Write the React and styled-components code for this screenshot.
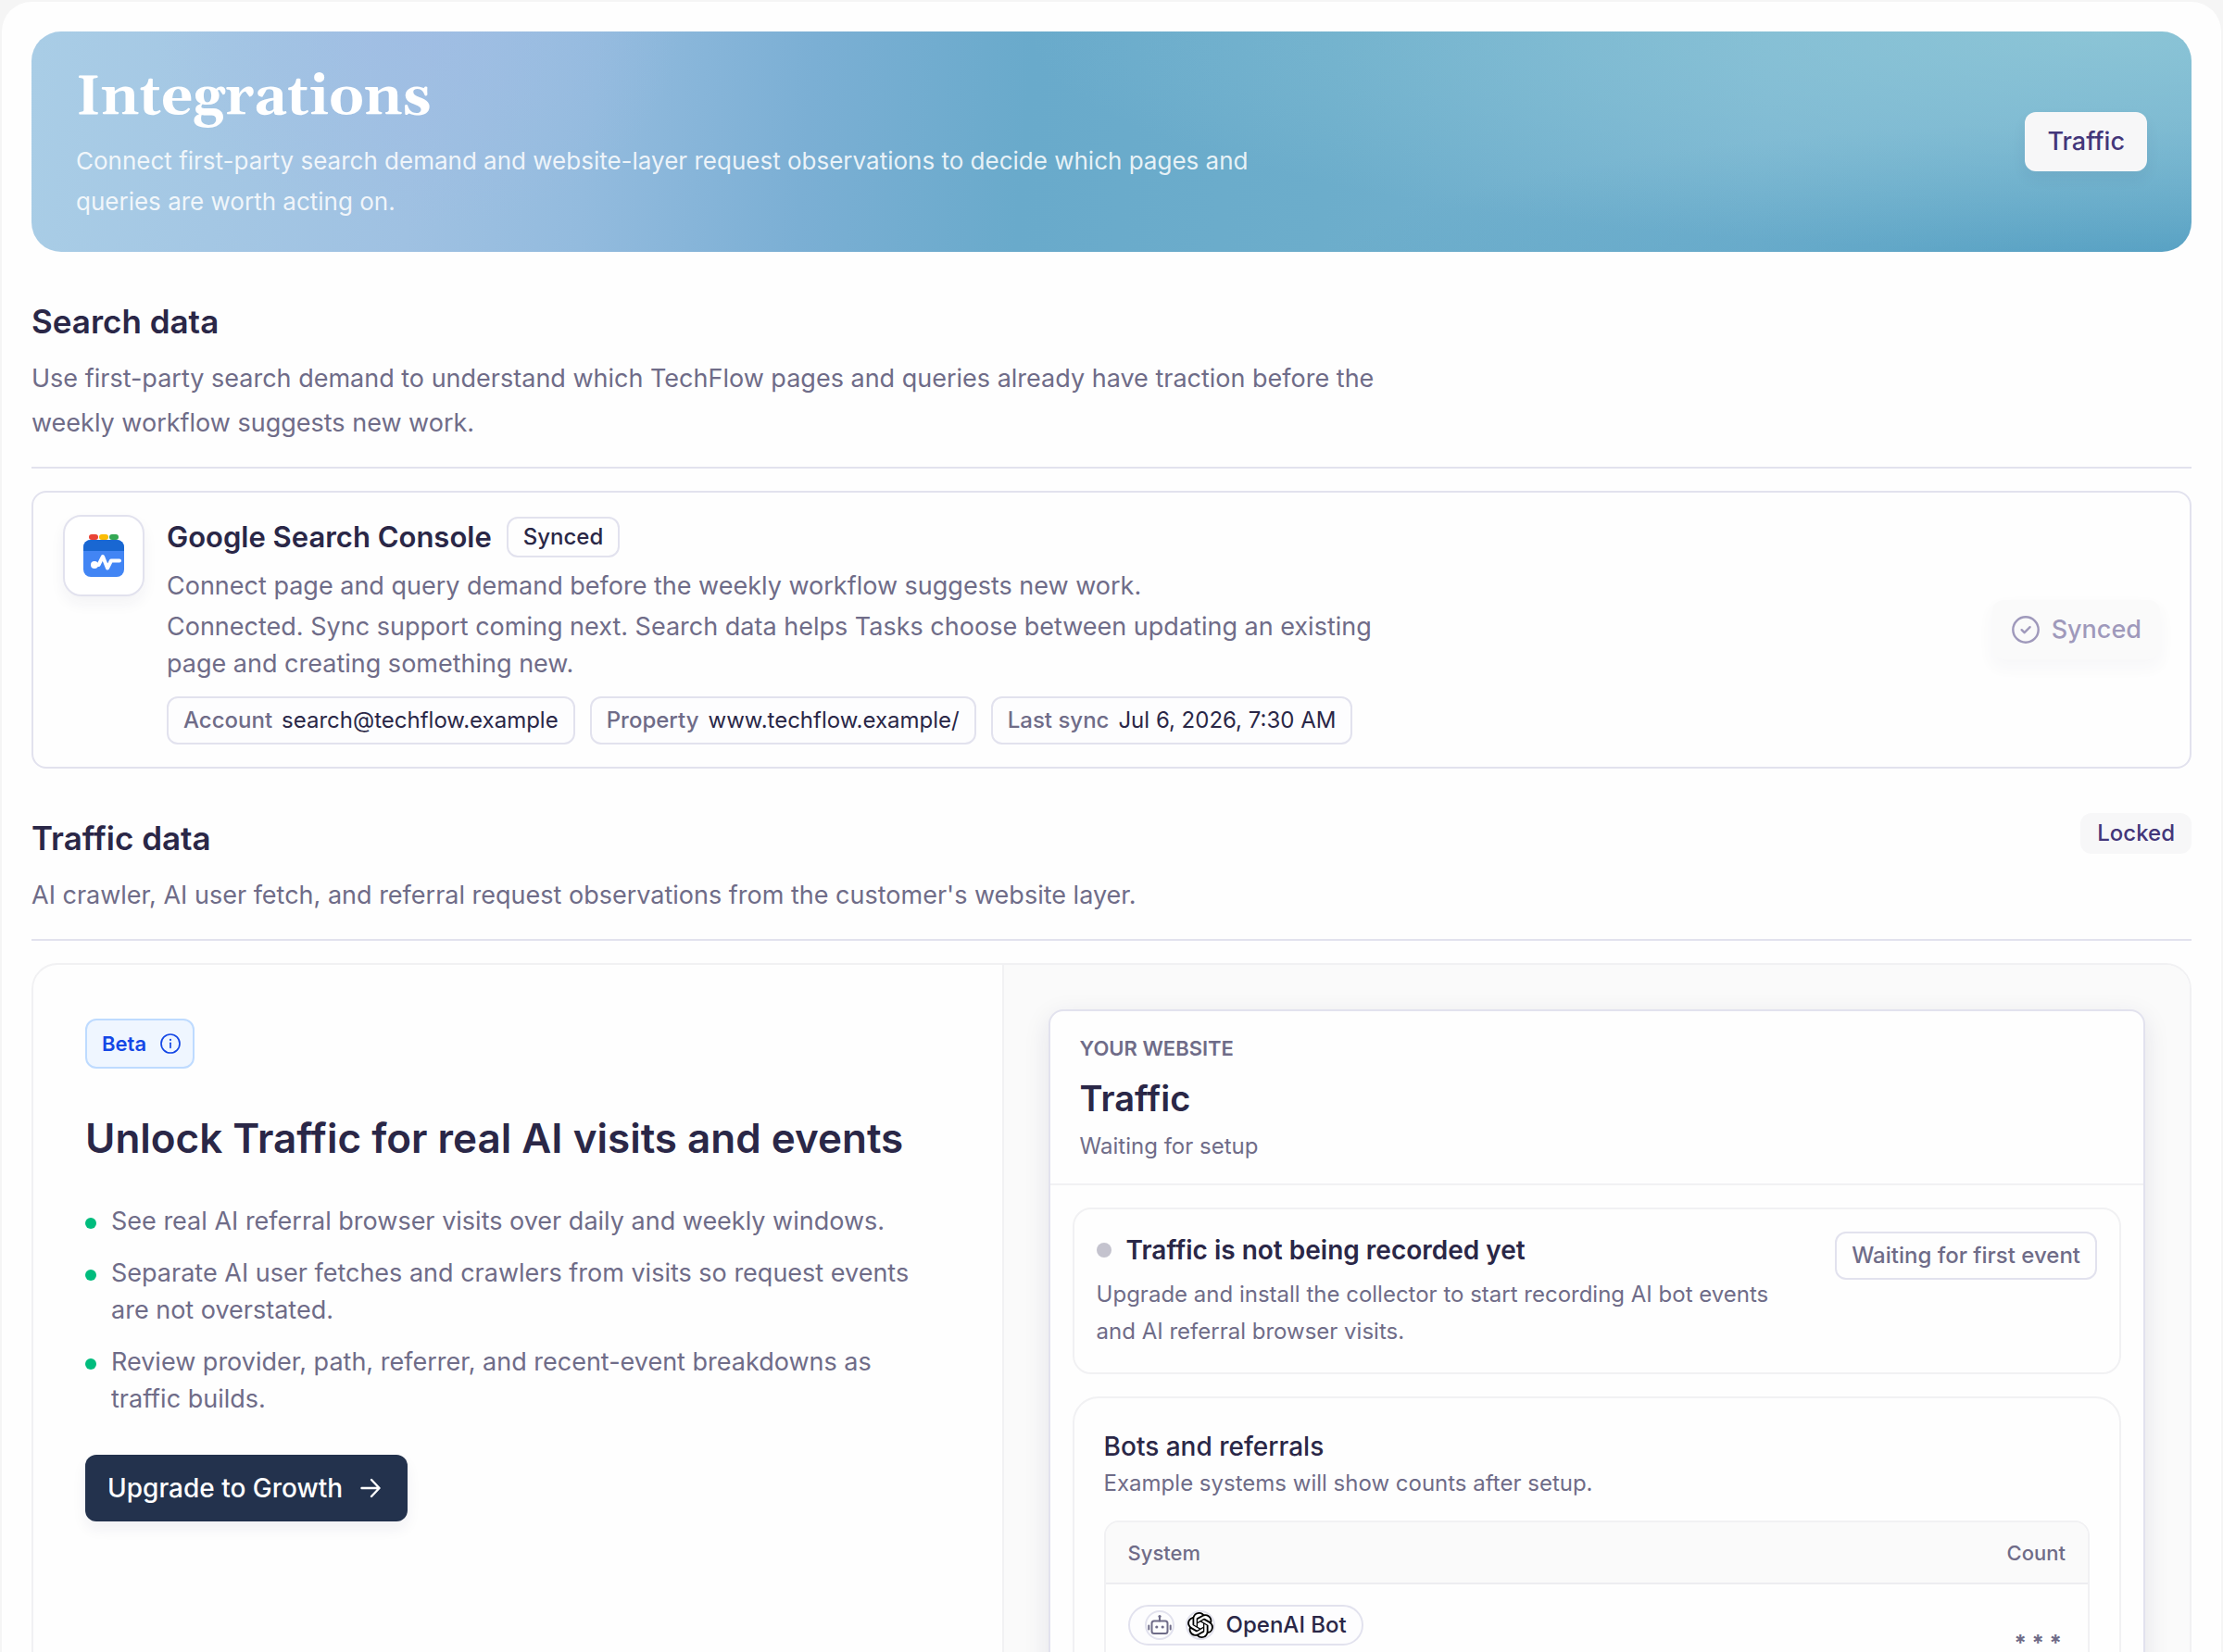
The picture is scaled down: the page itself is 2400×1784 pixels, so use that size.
import styled, { createGlobalStyle, css } from "styled-components";
import { SiOpenai } from "react-icons/si";

const GlobalStyle = createGlobalStyle`
  :root {
    --cl-ink: #2a2747;
    --cl-muted: #6f6c88;
    --cl-accent: #43367a;
    --cl-line: #e2e2ee;
    --cl-line-soft: #f1f1f3;
    --cl-surface: #fafafa;
    --cl-chip: #f7f7f8;
    --cl-navy: #23324d;
    --cl-green: #00bc7d;
  }

  *,
  *::before,
  *::after {
    box-sizing: border-box;
    margin: 0;
    padding: 0;
  }

  body {
    background: #f5f5f5;
    color: var(--cl-ink);
    font-family: Inter, "Liberation Sans", sans-serif;
    font-size: 27px;
    line-height: 40px;
  }

  button {
    font: inherit;
    cursor: pointer;
  }
`;

const Shell = styled.div`
  height: 100vh;
  padding: 2px 2px 0;
  overflow: hidden;
`;

const Page = styled.main`
  display: flex;
  flex-direction: column;
  gap: 48px;
  min-height: 100%;
  padding: 32px;
  background: #fefefe;
  border-radius: 32px;
`;

/* Hero */

const Hero = styled.header`
  display: flex;
  align-items: center;
  justify-content: space-between;
  gap: 48px;
  padding: 32px 48px;
  border-radius: 32px;
  background: radial-gradient(
      ellipse 50% 100% at 96% 0%,
      rgba(148, 203, 217, 0.75),
      rgba(148, 203, 217, 0) 100%
    ),
    radial-gradient(
      ellipse 40% 70% at 100% 110%,
      rgba(82, 158, 193, 0.9),
      rgba(82, 158, 193, 0) 100%
    ),
    radial-gradient(
      ellipse 12% 90% at 18% 0%,
      rgba(160, 188, 228, 0.7),
      rgba(160, 188, 228, 0) 100%
    ),
    linear-gradient(
      95deg,
      #a9cde6 0%,
      #9fc1e2 18%,
      #93bbde 26%,
      #7bafd4 36%,
      #69aacb 46%,
      #6cadcb 60%,
      #78b4d1 80%,
      #6fafcd 100%
    );
`;

const HeroText = styled.div`
  display: flex;
  flex-direction: column;
  gap: 6px;
  max-width: 1344px;
`;

const HeroTitle = styled.h1`
  color: #fff;
  font-family: Georgia, Gelasio, "DejaVu Serif", serif;
  font-size: 60px;
  line-height: 80px;
`;

const HeroCopy = styled.p`
  color: rgba(255, 255, 255, 0.85);
  font-size: 26px;
  line-height: 44px;
`;

const Button = styled.button`
  display: inline-flex;
  align-items: center;
  flex-shrink: 0;
  gap: 12px;
  height: 64px;
  padding: 0 24px;
  border: 0;
  border-radius: 12px;
  background: var(--cl-chip);
  color: var(--cl-accent);
  font-weight: 500;
  box-shadow: 0 8px 16px rgba(30, 40, 80, 0.06);

  &:disabled {
    padding: 0 20px;
    opacity: 0.5;
    cursor: default;
  }

  ${(props) =>
    props.$primary &&
    css`
      gap: 18px;
      height: 72px;
      padding: 0 28px 0 24px;
      background: var(--cl-navy);
      color: #fff;
      font-size: 28px;
    `}
`;

/* Sections */

const Section = styled.section`
  display: flex;
  flex-direction: column;
  gap: 24px;
`;

const SectionHead = styled.div`
  display: flex;
  align-items: flex-start;
  justify-content: space-between;
  padding-bottom: 23px;
  border-bottom: 2px solid var(--cl-line);
`;

const SectionTitle = styled.h2`
  margin-bottom: 11px;
  font-size: 35px;
  font-weight: 600;
  line-height: 54px;
`;

const SectionCopy = styled.p`
  max-width: 1536px;
  color: var(--cl-muted);
  line-height: 48px;
`;

const Badge = styled.span`
  display: inline-flex;
  align-items: center;
  flex-shrink: 0;
  height: ${(props) => (props.$tall ? "52px" : "44px")};
  padding: 0 16px;
  border: 2px solid
    ${(props) => (props.$filled ? "var(--cl-chip)" : "var(--cl-line)")};
  border-radius: 12px;
  background: ${(props) => (props.$filled ? "var(--cl-chip)" : "transparent")};
  color: ${(props) => props.$color || "var(--cl-ink)"};
  font-size: 24px;
  font-weight: 500;
  white-space: nowrap;
`;

/* Search Console card */

const SourceCard = styled.article`
  display: flex;
  align-items: center;
  justify-content: space-between;
  gap: 32px;
  padding: 24px 32px;
  border: 2px solid var(--cl-line);
  border-radius: 16px;
`;

const Source = styled.div`
  display: flex;
  align-items: flex-start;
  gap: 24px;
`;

const LogoTile = styled.div`
  display: grid;
  place-items: center;
  flex-shrink: 0;
  width: 88px;
  height: 88px;
  border: 2px solid var(--cl-line);
  border-radius: 20px;
  background: #fff;
  box-shadow: 0 8px 16px rgba(30, 40, 80, 0.05);
`;

const SourceBody = styled.div`
  max-width: 1344px;
  color: var(--cl-muted);
`;

const SourceTitleRow = styled.div`
  display: flex;
  align-items: center;
  gap: 16px;
  height: 48px;
  margin-bottom: 9px;
`;

const SourceTitle = styled.h3`
  color: var(--cl-ink);
  font-size: 31px;
  font-weight: 600;
`;

const SourceNote = styled.p`
  margin: 4px 0 15px;
`;

const Facts = styled.dl`
  display: flex;
  flex-wrap: wrap;
  gap: 16px;
`;

const Fact = styled.div`
  display: flex;
  align-items: center;
  gap: 10px;
  height: 52px;
  padding: 0 16px;
  border: 2px solid var(--cl-line);
  border-radius: 12px;
  background: #fdfdfe;
  font-size: 24px;

  dt {
    font-weight: 500;
  }

  dd {
    color: var(--cl-ink);
  }
`;

/* Traffic upsell */

const Upsell = styled.div`
  display: grid;
  grid-template-columns: 0.9fr 1.1fr;
  border: 2px solid var(--cl-line-soft);
  border-radius: 28px;
  overflow: hidden;
`;

const Pitch = styled.div`
  display: flex;
  flex-direction: column;
  align-items: flex-start;
  gap: 40px;
  padding: 58px 56px;
  border-right: 2px solid var(--cl-line-soft);
`;

const BetaTag = styled.button`
  display: inline-flex;
  align-items: center;
  gap: 14px;
  height: 54px;
  padding: 0 12px 0 16px;
  border: 2px solid #bedbff;
  border-radius: 12px;
  background: #eff6ff;
  color: #1447e6;
  font-size: 22px;
  font-weight: 600;
`;

const PitchTitle = styled.h3`
  padding-top: 5px;
  font-size: 44px;
  font-weight: 600;
  line-height: 60px;
`;

const Benefits = styled.ul`
  display: flex;
  flex-direction: column;
  gap: 16px;
  max-width: 920px;
  list-style: none;
  color: var(--cl-muted);
`;

const Benefit = styled.li`
  display: flex;
  gap: 16px;

  &::before {
    content: "";
    flex-shrink: 0;
    width: 12px;
    height: 12px;
    margin-top: 16px;
    border-radius: 50%;
    background: var(--cl-green);
  }
`;

const Preview = styled.div`
  padding: 48px;
  background: var(--cl-surface);
`;

const Mock = styled.div`
  border: 2px solid var(--cl-line);
  border-radius: 16px;
  background: #fefefe;
  box-shadow: 0 8px 28px rgba(30, 30, 80, 0.1);
`;

const MockHead = styled.div`
  padding: 24px 32px 22px;
  border-bottom: 2px solid var(--cl-line-soft);
  color: var(--cl-muted);
`;

const Eyebrow = styled.p`
  font-size: 22px;
  font-weight: 600;
  line-height: 32px;
  text-transform: uppercase;
`;

const MockTitle = styled.h4`
  margin: 12px 0 8px;
  color: var(--cl-ink);
  font-size: 38px;
  font-weight: 600;
  line-height: 52px;
`;

const Small = styled.p`
  color: var(--cl-muted);
  font-size: 24px;
  line-height: ${(props) => (props.$tight ? "36px" : "40px")};
`;

const MockBody = styled.div`
  display: flex;
  flex-direction: column;
  gap: 24px;
  padding: 24px;
`;

const StatusCard = styled.div`
  display: flex;
  align-items: flex-start;
  justify-content: space-between;
  gap: 32px;
  padding: 24px;
  border: 2px solid var(--cl-line-soft);
  border-radius: 20px;
`;

const StatusText = styled.div`
  max-width: 750px;
`;

const StatusTitle = styled.h5`
  display: flex;
  align-items: center;
  gap: 16px;
  margin-bottom: 8px;
  font-size: 28px;
  font-weight: 600;

  &::before {
    content: "";
    width: 16px;
    height: 16px;
    border-radius: 50%;
    background: #c4c3ce;
  }
`;

const BotsCard = styled.div`
  padding: 32px;
  border: 2px solid var(--cl-line-soft);
  border-radius: 28px;
`;

const BotsTitle = styled.h5`
  font-size: 28px;
  font-weight: 500;
`;

const TableFrame = styled.div`
  margin-top: 20px;
  border: 2px solid var(--cl-line-soft);
  border-radius: 16px;
  overflow: hidden;
`;

const Table = styled.table`
  width: 100%;
  border-collapse: collapse;
  text-align: left;
  color: var(--cl-muted);

  th {
    height: 66px;
    padding: 0 24px;
    border-bottom: 2px solid #ededf0;
    background: var(--cl-surface);
    font-size: 22px;
    font-weight: 500;
  }

  td {
    height: 128px;
    padding: 22px 24px;
    vertical-align: top;
    font-size: 24px;
    font-weight: 700;
  }

  th:last-child,
  td:last-child {
    text-align: right;
  }

  td:last-child {
    padding: 52px 28px;
    line-height: 24px;
  }
`;

const SystemPill = styled.span`
  display: inline-flex;
  align-items: center;
  gap: 12px;
  height: 44px;
  padding: 0 16px;
  border: 2px solid var(--cl-line);
  border-radius: 22px;
  background: #fdfdfe;
  color: var(--cl-ink);
  font-size: 24px;
  font-weight: 500;
`;

const PillIcon = styled.span`
  display: grid;
  place-items: center;
  width: 32px;
  height: 32px;
  border: 2px solid var(--cl-line);
  border-radius: 50%;
  color: ${(props) => (props.$dark ? "#000" : "var(--cl-muted)")};
`;

function SearchConsoleLogo() {
  return (
    <svg width="44" height="47" viewBox="0 0 44 47" aria-hidden="true">
      <rect x="6" y="0" width="10" height="6" rx="3" fill="#ea4335" />
      <rect x="17" y="0" width="10" height="6" rx="3" fill="#fbbc04" />
      <rect x="28" y="0" width="10" height="6" rx="3" fill="#34a853" />
      <rect y="6" width="44" height="40" rx="8" fill="#4285f4" />
      <path d="M0 18v-4a8 8 0 0 1 8-8h28a8 8 0 0 1 8 8v4z" fill="#1967d2" />
      <circle cx="12" cy="33" r="4" fill="#fff" />
      <path
        d="M12 33h4.500l4.500-9 5 12.500 4-8h9"
        fill="none"
        stroke="#fff"
        strokeWidth="4"
        strokeLinecap="round"
        strokeLinejoin="round"
      />
    </svg>
  );
}

function CheckCircle() {
  return (
    <svg width="32" height="32" viewBox="0 0 32 32" fill="none" aria-hidden="true">
      <circle cx="16" cy="16" r="13.700" stroke="currentColor" strokeWidth="2.400" />
      <path
        d="M11.600 16.200l3 3 6-6"
        stroke="currentColor"
        strokeWidth="2.400"
        strokeLinecap="round"
        strokeLinejoin="round"
      />
    </svg>
  );
}

function InfoCircle() {
  return (
    <svg width="24" height="24" viewBox="0 0 24 24" fill="none" aria-hidden="true">
      <circle cx="12" cy="12" r="10" stroke="currentColor" strokeWidth="1.700" />
      <path d="M12 11.300v5" stroke="currentColor" strokeWidth="1.700" strokeLinecap="round" />
      <circle cx="12" cy="7.900" r="1.100" fill="currentColor" />
    </svg>
  );
}

function ArrowRight() {
  return (
    <svg width="24" height="24" viewBox="0 0 24 24" fill="none" aria-hidden="true">
      <path
        d="M2.500 12h19M13 3l8.500 9-8.500 9"
        stroke="currentColor"
        strokeWidth="2.400"
        strokeLinecap="round"
        strokeLinejoin="round"
      />
    </svg>
  );
}

function BotIcon() {
  return (
    <svg width="26" height="26" viewBox="0 0 26 26" fill="none" aria-hidden="true">
      <g stroke="currentColor" strokeWidth="2" strokeLinecap="round">
        <rect x="4.500" y="8.500" width="17" height="13.500" rx="2.500" />
        <path d="M13 8.500V4M1.300 13.500v4M24.700 13.500v4" />
      </g>
      <circle cx="13" cy="3.500" r="1.600" fill="currentColor" />
      <circle cx="9.800" cy="15" r="1.600" fill="currentColor" />
      <circle cx="16.200" cy="15" r="1.600" fill="currentColor" />
    </svg>
  );
}

const facts = [
  { label: "Account", value: "search@techflow.example" },
  { label: "Property", value: "www.techflow.example/" },
  { label: "Last sync", value: "Jul 6, 2026, 7:30 AM" },
];

const benefits = [
  "See real AI referral browser visits over daily and weekly windows.",
  "Separate AI user fetches and crawlers from visits so request events are not overstated.",
  "Review provider, path, referrer, and recent-event breakdowns as traffic builds.",
];

function SearchData() {
  return (
    <Section>
      <SectionHead>
        <div>
          <SectionTitle>Search data</SectionTitle>
          <SectionCopy>
            Use first-party search demand to understand which TechFlow pages and
            queries already have traction before the weekly workflow suggests
            new work.
          </SectionCopy>
        </div>
      </SectionHead>
      <SourceCard>
        <Source>
          <LogoTile>
            <SearchConsoleLogo />
          </LogoTile>
          <SourceBody>
            <SourceTitleRow>
              <SourceTitle>Google Search Console</SourceTitle>
              <Badge>Synced</Badge>
            </SourceTitleRow>
            <p>
              Connect page and query demand before the weekly workflow suggests
              new work.
            </p>
            <SourceNote>
              Connected. Sync support coming next. Search data helps Tasks
              choose between updating an existing page and creating something
              new.
            </SourceNote>
            <Facts>
              {facts.map(({ label, value }) => (
                <Fact key={label}>
                  <dt>{label}</dt>
                  <dd>{value}</dd>
                </Fact>
              ))}
            </Facts>
          </SourceBody>
        </Source>
        <Button type="button" disabled>
          <CheckCircle />
          Synced
        </Button>
      </SourceCard>
    </Section>
  );
}

function TrafficPreview() {
  return (
    <Mock>
      <MockHead>
        <Eyebrow>Your website</Eyebrow>
        <MockTitle>Traffic</MockTitle>
        <Small $tight>Waiting for setup</Small>
      </MockHead>
      <MockBody>
        <StatusCard>
          <StatusText>
            <StatusTitle>Traffic is not being recorded yet</StatusTitle>
            <Small>
              Upgrade and install the collector to start recording AI bot events
              and AI referral browser visits.
            </Small>
          </StatusText>
          <Badge $tall $color="var(--cl-muted)">
            Waiting for first event
          </Badge>
        </StatusCard>
        <BotsCard>
          <BotsTitle>Bots and referrals</BotsTitle>
          <Small>Example systems will show counts after setup.</Small>
          <TableFrame>
            <Table>
              <thead>
                <tr>
                  <th scope="col">System</th>
                  <th scope="col">Count</th>
                </tr>
              </thead>
              <tbody>
                <tr>
                  <td>
                    <SystemPill>
                      <PillIcon>
                        <BotIcon />
                      </PillIcon>
                      <PillIcon $dark>
                        <SiOpenai size={28} />
                      </PillIcon>
                      OpenAI Bot
                    </SystemPill>
                  </td>
                  <td>* * *</td>
                </tr>
              </tbody>
            </Table>
          </TableFrame>
        </BotsCard>
      </MockBody>
    </Mock>
  );
}

function TrafficData() {
  return (
    <Section>
      <SectionHead>
        <div>
          <SectionTitle>Traffic data</SectionTitle>
          <SectionCopy>
            AI crawler, AI user fetch, and referral request observations from
            the customer's website layer.
          </SectionCopy>
        </div>
        <Badge $filled $color="var(--cl-accent)">
          Locked
        </Badge>
      </SectionHead>
      <Upsell>
        <Pitch>
          <BetaTag type="button">
            Beta
            <InfoCircle />
          </BetaTag>
          <PitchTitle>Unlock Traffic for real AI visits and events</PitchTitle>
          <Benefits>
            {benefits.map((text) => (
              <Benefit key={text}>{text}</Benefit>
            ))}
          </Benefits>
          <Button $primary type="button">
            Upgrade to Growth
            <ArrowRight />
          </Button>
        </Pitch>
        <Preview>
          <TrafficPreview />
        </Preview>
      </Upsell>
    </Section>
  );
}

function App() {
  return (
    <Shell>
      <GlobalStyle />
      <Page>
        <Hero>
          <HeroText>
            <HeroTitle>Integrations</HeroTitle>
            <HeroCopy>
              Connect first-party search demand and website-layer request
              observations to decide which pages and queries are worth acting
              on.
            </HeroCopy>
          </HeroText>
          <Button type="button">Traffic</Button>
        </Hero>
        <SearchData />
        <TrafficData />
      </Page>
    </Shell>
  );
}

export default App;
